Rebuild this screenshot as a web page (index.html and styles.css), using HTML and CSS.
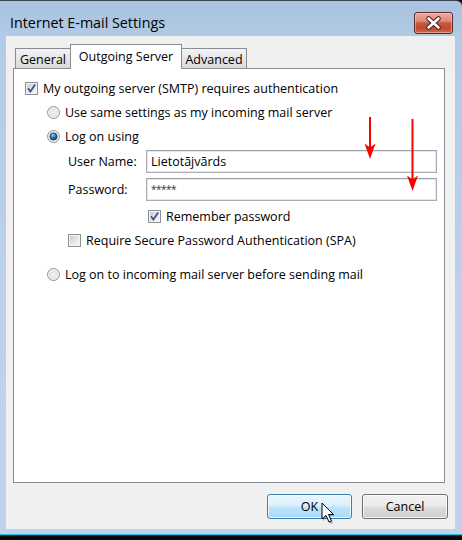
FILE: index.html
```html
<!DOCTYPE html>
<html>
<head>
<meta charset="utf-8">
<link rel="stylesheet" href="styles.css">
</head>
<body>
<div class="window">
  <div class="titlebar">
    <span class="title">Internet E-mail Settings</span>
    <div class="close">
      <svg width="39" height="22" viewBox="0 0 39 22">
        <path d="M14.5 6.5 L24.5 15.5 M24.5 6.5 L14.5 15.5" stroke="#4a1d1a" stroke-width="4.6" stroke-linecap="round"/>
        <path d="M14.5 6.5 L24.5 15.5 M24.5 6.5 L14.5 15.5" stroke="#ffffff" stroke-width="2.6" stroke-linecap="round"/>
      </svg>
    </div>
  </div>
  <div class="client">
    <div class="tabs">
      <div class="tab t-general">General</div>
      <div class="tab active t-out">Outgoing Server</div>
      <div class="tab t-adv">Advanced</div>
    </div>
    <div class="panel">
      <div class="row">
        <svg class="cb" width="13" height="13" viewBox="0 0 13 13"><use href="#cbox"/><path d="M3 6.3 L5.4 9.6 L10.2 2.6" fill="none" stroke="#3d4f8e" stroke-width="1.7"/></svg>
        <span>My outgoing server (SMTP) requires authentication</span>
      </div>
      <div class="row indent1">
        <svg class="rb" width="13" height="13" viewBox="0 0 13 13"><use href="#rbox"/></svg>
        <span>Use same settings as my incoming mail server</span>
      </div>
      <div class="row indent1">
        <svg class="rb" width="13" height="13" viewBox="0 0 13 13"><use href="#rbox"/><circle cx="6.5" cy="6.5" r="3.6" fill="url(#dot)" stroke="#163a5e" stroke-width="0.8"/></svg>
        <span>Log on using</span>
      </div>
      <div class="field f-user">
        <span class="flabel">User Name:</span>
        <div class="input">Lietotājvārds</div>
      </div>
      <div class="field f-pass">
        <span class="flabel">Password:</span>
        <div class="input pw">*****</div>
      </div>
      <div class="row indent-rem">
        <svg class="cb" width="13" height="13" viewBox="0 0 13 13"><use href="#cbox"/><path d="M3 6.3 L5.4 9.6 L10.2 2.6" fill="none" stroke="#3d4f8e" stroke-width="1.7"/></svg>
        <span>Remember password</span>
      </div>
      <div class="row indent-spa">
        <svg class="cb" width="13" height="13" viewBox="0 0 13 13"><use href="#cbox"/></svg>
        <span>Require Secure Password Authentication (SPA)</span>
      </div>
      <div class="row indent1 last">
        <svg class="rb" width="13" height="13" viewBox="0 0 13 13"><use href="#rbox"/></svg>
        <span>Log on to incoming mail server before sending mail</span>
      </div>
    </div>
    <div class="buttons">
      <div class="btn ok">OK</div>
      <div class="btn">Cancel</div>
    </div>
  </div>
</div>
<div class="taskbar"></div>

<svg class="overlay" width="462" height="540" viewBox="0 0 462 540">
  <rect x="369" y="117" width="2" height="32" fill="#ff0000"/>
  <polygon points="370,159 364.5,143.5 370,147.5 375.5,143.5" fill="#ff0000"/>
  <rect x="411.5" y="119" width="2" height="62" fill="#ff0000"/>
  <polygon points="412.5,191 407,175.5 412.5,179.5 418,175.5" fill="#ff0000"/>
  <g transform="translate(322 503)">
    <polygon points="1,1 1,18 5,14 8,21 11,20 8,13 13,13" fill="rgba(0,0,0,0.25)"/>
    <polygon points="0,0 0,16 4,12.5 7,19 9.5,18 6.5,11.5 11.5,11.5" fill="#ffffff" stroke="#000" stroke-width="1" stroke-linejoin="miter"/>
  </g>
</svg>

<svg width="0" height="0" class="defs">
  <defs>
    <linearGradient id="cbfill" x1="0" y1="0" x2="1" y2="1">
      <stop offset="0" stop-color="#cbcfd5"/>
      <stop offset="1" stop-color="#f7f7f7"/>
    </linearGradient>
    <radialGradient id="rbfill" cx="0.5" cy="0.5" r="0.6">
      <stop offset="0" stop-color="#f2f2f2"/>
      <stop offset="0.6" stop-color="#e3e3e3"/>
      <stop offset="1" stop-color="#cfcfcf"/>
    </radialGradient>
    <radialGradient id="dot" cx="0.4" cy="0.3" r="0.8">
      <stop offset="0" stop-color="#8fd6f7"/>
      <stop offset="0.45" stop-color="#2b7ab8"/>
      <stop offset="1" stop-color="#0d2e52"/>
    </radialGradient>
    <g id="cbox">
      <rect x="0.5" y="0.5" width="12" height="12" fill="#f4f4f4" stroke="#8e8f8f"/>
      <rect x="2" y="2" width="9" height="9" fill="url(#cbfill)"/>
    </g>
    <g id="rbox">
      <circle cx="6.5" cy="6.5" r="6" fill="url(#rbfill)" stroke="#969696"/>
      <circle cx="6.5" cy="6.5" r="4.8" fill="none" stroke="#f6f6f6" stroke-width="0.8"/>
    </g>
  </defs>
</svg>
</body>
</html>
```

FILE: styles.css
```css
html, body {
  margin: 0;
  padding: 0;
}
body {
  width: 462px;
  height: 540px;
  overflow: hidden;
  position: relative;
  background: #0b0b0b;
  font-family: "Open Sans", "Noto Sans", sans-serif;
  font-size: 12.5px;
  color: #000;
}
.window {
  box-sizing: border-box;
  height: 534px;
  display: flex;
  flex-direction: column;
  border-top: 1px solid #3b4452;
  border-top-right-radius: 6px;
  background: linear-gradient(#a8c2df 0px, #b3cbe6 40px, #bcd2eb 300px, #bed4ec 534px);
}
.titlebar {
  height: 35px;
  box-sizing: border-box;
  padding: 7px 9px 0 10px;
  display: flex;
  align-items: center;
  justify-content: space-between;
}
.title {
  font-size: 14.3px;
  color: #000;
}
.close {
  width: 39px;
  height: 22px;
  box-sizing: border-box;
  border: 1px solid #5b2a2a;
  border-radius: 3px;
  background: linear-gradient(#e9ab9f 0%, #dd8a79 40%, #c75a40 50%, #c2482e 75%, #cc6a4c 100%);
  box-shadow: inset 0 0 0 1px rgba(255, 220, 210, 0.45);
  display: flex;
  align-items: center;
  justify-content: center;
  margin-top: 1px;
}
.close svg {
  display: block;
  margin: -1px;
}
.client {
  flex: 1;
  margin: 0 7px 5px 6px;
  background: #f0f0f0;
  padding: 8px 7px 0 7px;
  display: flex;
  flex-direction: column;
}
.tabs {
  height: 24px;
  display: flex;
  align-items: flex-end;
  padding-left: 2px;
  position: relative;
  z-index: 1;
}
.tab {
  box-sizing: border-box;
  height: 20px;
  border: 1px solid #898c95;
  border-bottom: none;
  background: linear-gradient(#f3f3f3, #e6e6e6 50%, #dadada);
  display: flex;
  align-items: center;
  justify-content: center;
  padding-top: 2px;
  white-space: nowrap;
}
.t-general { width: 56px; }
.t-out { width: 112px; margin-left: -1px; }
.t-adv { width: 66px; margin-left: -1px; }
.tab.active {
  height: 25px;
  margin-bottom: -1px;
  background: #ffffff;
  padding-top: 0;
  padding-bottom: 1px;
  position: relative;
  z-index: 2;
}
.panel {
  box-sizing: border-box;
  height: 415px;
  margin-right: 3px;
  border: 1px solid #898c95;
  background: #ffffff;
  padding: 7px 0 0 11px;
  display: flex;
  flex-direction: column;
}
.row {
  height: 24px;
  display: flex;
  align-items: center;
  gap: 5px;
  white-space: nowrap;
}
.row svg {
  display: block;
  flex: none;
}
.indent1 { margin-left: 22px; }
.indent-rem { margin-left: 123px; margin-top: 3px; }
.indent-spa { margin-left: 43px; }
.last { margin-top: 10px; }
.field {
  height: 23px;
  display: flex;
  align-items: center;
  margin-left: 43px;
}
.f-user { margin-top: 2px; }
.f-pass { margin-top: 5px; }
.flabel {
  width: 78px;
  flex: none;
}
.input {
  box-sizing: border-box;
  width: 291px;
  height: 23px;
  border: 1px solid #abadb3;
  border-top-color: #9aa2ad;
  box-shadow: inset 0 0 0 1px #e2e8ef;
  background: #fff;
  padding: 0 0 0 4px;
  display: flex;
  align-items: center;
  font-size: 12.5px;
}
.input.pw {
  font-size: 10px;
  align-items: flex-start;
  padding-top: 3px;
  color: #333;
  letter-spacing: -0.5px;
}
.buttons {
  margin-top: 11px;
  display: flex;
  justify-content: flex-end;
  gap: 10px;
}
.btn {
  box-sizing: border-box;
  width: 86px;
  height: 25px;
  border: 1px solid #707070;
  border-radius: 3px;
  background: linear-gradient(#f2f2f2 0%, #ebebeb 48%, #dddddd 52%, #cfcfcf 100%);
  box-shadow: inset 0 0 0 1px rgba(255, 255, 255, 0.7);
  display: flex;
  align-items: center;
  justify-content: center;
  font-size: 12.5px;
}
.btn.ok {
  width: 85px;
  border-color: #3c7fb1;
  background: linear-gradient(#eaf6fd 0%, #d9f0fc 48%, #bee6fd 52%, #a7d9f5 100%);
}
.taskbar {
  height: 6px;
  border-top: 1px solid #2ebbe0;
  background: linear-gradient(#3d3d3d, #000 2px, #101010);
}
.overlay {
  position: absolute;
  left: 0;
  top: 0;
  pointer-events: none;
}
.defs {
  position: absolute;
  width: 0;
  height: 0;
}
```
